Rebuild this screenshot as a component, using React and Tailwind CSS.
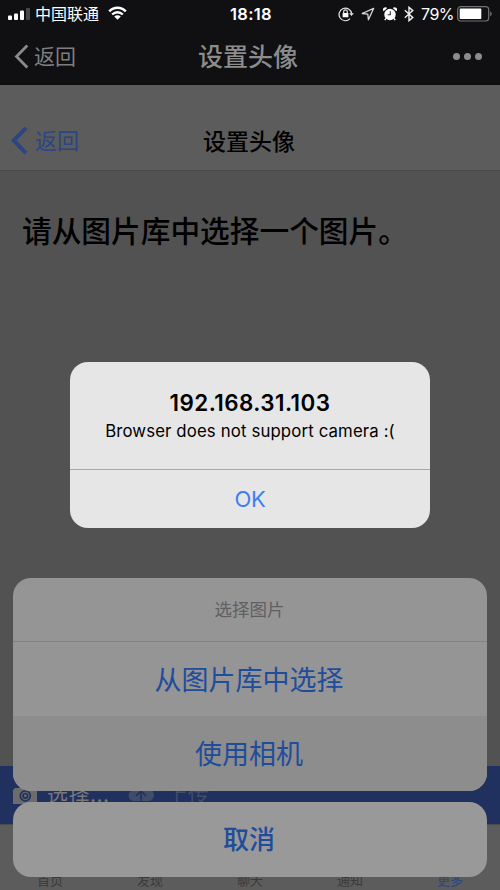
import React from "react";

const TABS = ["首页", "发现", "聊天", "通知", "更多"];

const SignalIcon = () => (
  <svg width="23" height="13" viewBox="0 0 23 13">
    <rect x="0" y="7.5" width="4" height="4.5" rx="1" fill="#fff" />
    <rect x="6" y="5.5" width="4" height="6.5" rx="1" fill="#fff" />
    <rect x="12" y="2.5" width="4" height="9.5" rx="1" fill="#fff" />
    <rect x="18" y="0" width="4" height="12" rx="1" fill="#48484a" />
  </svg>
);

const WifiIcon = () => (
  <svg width="19" height="14" viewBox="0 0 20 14" fill="none" stroke="#fff">
    <path d="M1.3 5.2C6.3 0.1 13.7 0.1 18.7 5.2" strokeWidth="2.6" />
    <path d="M4.4 8.6C7.6 5.4 12.4 5.4 15.6 8.6" strokeWidth="2.4" />
    <path d="M10 14L6.6 10.7C8.5 9 11.5 9 13.4 10.7Z" fill="#fff" stroke="none" />
  </svg>
);

const LockIcon = () => (
  <svg width="16" height="16" viewBox="0 0 16 16" fill="none" stroke="#e8e8e8" strokeWidth="1.2">
    <path d="M12 12.7A6.3 6.3 0 1 1 13.6 7.6" />
    <path d="M11.2 7.2H15.8L13.5 10Z" fill="#e8e8e8" stroke="none" />
    <rect x="4.6" y="7" width="5.8" height="4.3" rx="0.5" fill="#fff" stroke="none" />
    <path d="M5.7 7.3V5.6A1.8 1.8 0 0 1 9.3 5.6V7.3" />
  </svg>
);

const LocationIcon = () => (
  <svg width="14" height="14" viewBox="0 0 14 14" fill="none" stroke="#d8d8d8" strokeWidth="1.3" strokeLinejoin="round">
    <path d="M12.6 1.4L1.2 6.5L6.8 7.2L7.4 12.8Z" />
  </svg>
);

const AlarmIcon = () => (
  <svg width="14" height="14" viewBox="0 0 14 14">
    <circle cx="7" cy="7.5" r="5.7" fill="#fff" />
    <path d="M0.6 4.2A2.3 2.3 0 0 1 4.2 1.1ZM13.4 4.2A2.3 2.3 0 0 0 9.8 1.1Z" fill="#fff" />
    <path d="M3 11.4L1.8 13.2M11 11.4L12.2 13.2" stroke="#fff" strokeWidth="1.4" />
    <path d="M7.3 4.2V7.8H4.6" stroke="#303032" strokeWidth="1.1" fill="none" />
  </svg>
);

const BluetoothIcon = () => (
  <svg width="10" height="16" viewBox="0 0 10 16" fill="none" stroke="#f0f0f0" strokeWidth="1.4">
    <path d="M0.8 4.3L8.8 11.4L5 14.7V1.3L8.8 4.6L0.8 11.7" />
  </svg>
);

const BatteryIcon = () => (
  <svg width="36" height="16" viewBox="0 0 36 16">
    <rect x="0.7" y="0.7" width="31" height="14.3" rx="3" fill="none" stroke="#737375" strokeWidth="1.2" />
    <rect x="2.7" y="2.6" width="21.6" height="10.5" rx="0.8" fill="#fff" />
    <path d="M33.2 5.5C35.2 6.2 35.2 9.5 33.2 10.2Z" fill="#737375" />
  </svg>
);

const StatusBar = () => (
  <div className="flex h-7 items-center pl-2 text-white">
    <SignalIcon />
    <span className="ml-1 w-[66px] text-[16px] leading-7">中国联通</span>
    <span className="ml-[7px] -mt-0.5">
      <WifiIcon />
    </span>
    <span className="ml-[103px] w-[46px] text-[16.5px] font-semibold leading-7 tracking-[0.3px]">18:18</span>
    <div className="ml-auto flex items-center pr-[7px]">
      <LockIcon />
      <span className="ml-[7px]"><LocationIcon /></span>
      <span className="ml-[8px]"><AlarmIcon /></span>
      <span className="ml-[7px]"><BluetoothIcon /></span>
      <span className="ml-[7px] w-[33px] text-[16px] leading-7 tracking-[-0.5px]">79%</span>
      <span className="ml-[3px]"><BatteryIcon /></span>
    </div>
  </div>
);

const WebViewNav = () => (
  <div className="grid h-[57px] grid-cols-3 items-center pl-[14px] pr-[18px] text-[#7e7e7f]">
    <div className="flex items-center">
      <svg width="15" height="25" viewBox="0 0 15 25" fill="none" stroke="#8a8a8b" strokeWidth="2.8">
        <path d="M13.3 1.5L2.5 12.5L13.3 23.5" />
      </svg>
      <span className="ml-[5px] text-[21px] leading-8">返回</span>
    </div>
    <h1 className="whitespace-nowrap pt-px text-center text-[25px] font-medium leading-8 text-[#8c8c8c]">设置头像</h1>
    <div className="flex justify-end gap-1">
      <i className="size-[7px] rounded-full bg-[#8c8c8c]" />
      <i className="size-[7px] rounded-full bg-[#8c8c8c]" />
      <i className="size-[7px] rounded-full bg-[#8c8c8c]" />
    </div>
  </div>
);

const PageHeader = () => (
  <div className="grid h-[86px] grid-cols-3 items-center border-b border-[#4a4a4a] bg-[#5c5c5c] pl-[10px] pr-[12px] pt-[26px]">
    <div className="flex items-center text-[#2a4684]">
      <svg width="18" height="29" viewBox="0 0 18 29" fill="none" stroke="currentColor" strokeWidth="4">
        <path d="M16 1.9L3.7 14.5L16 27.1" />
      </svg>
      <span className="ml-[7px] text-[22px] leading-8">返回</span>
    </div>
    <h2 className="pt-0.5 text-center text-[23px] font-medium leading-8 text-black">设置头像</h2>
  </div>
);

const UploadBar = () => (
  <div className="flex h-[58px] items-center bg-[#20315f] pl-[13px] text-[21px] text-[#777777]">
    <svg width="25" height="20" viewBox="0 0 25 20">
      <path d="M2 3H6L8 0H16L18 3H24V19H0V5Z" fill="#6c6c6c" />
      <circle cx="12.3" cy="10.8" r="5" fill="#6c6c6c" stroke="#20315f" strokeWidth="1.7" />
      <circle cx="12.3" cy="10.8" r="2.3" fill="none" stroke="#20315f" strokeWidth="1.7" />
    </svg>
    <span className="ml-[9px] w-[70px] whitespace-nowrap tracking-[0.5px]">选择...</span>
    <svg className="ml-[9px]" width="30" height="22" viewBox="0 0 28 22">
      <path d="M6 17A5.5 5.5 0 0 1 5 6.5A8 8 0 0 1 20 5A6 6 0 0 1 22 17Z" fill="#414c6b" />
      <path d="M14 17V7M9 12L14 7L19 12" stroke="#20315f" strokeWidth="1.6" fill="none" />
    </svg>
    <span className="ml-[11px] text-[#414c6b]">上传</span>
  </div>
);

const ActionSheet = () => (
  <div className="absolute bottom-[13px] left-[13px] w-[474px] text-center text-[#204c9c]">
    <div className="h-[213px] overflow-hidden rounded-[18px] bg-[#959595]">
      <p className="h-[64px] border-b border-[#828282] pr-px text-[17.5px] leading-[63px] text-[#606060]">选择图片</p>
      <p className="h-[74px] pr-[2px] text-[27px] leading-[77px]">从图片库中选择</p>
      <p className="h-[75px] bg-[#8d8d8d] pr-[2px] text-[27px] leading-[77px]">使用相机</p>
    </div>
    <div className="mt-[11px] h-[75px] rounded-[18px] bg-[#999999] pr-[2px] text-[26px] font-medium leading-[76px]">取消</div>
  </div>
);

const AlertDialog = () => (
  <div className="absolute left-[70px] top-[362px] h-[166px] w-[360px] overflow-hidden rounded-[18px] bg-[#e6e6e6] text-center text-black">
    <div className="h-[108px] border-b border-[#a9a9ab] pt-[27px]">
      <h3 className="text-[22.4px] font-semibold leading-7 tracking-[0.45px]">192.168.31.103</h3>
      <p className="mt-[2px] whitespace-nowrap text-[16.8px] leading-6 tracking-[0.13px]">Browser does not support camera :(</p>
    </div>
    <button className="h-[58px] w-full text-[22px] leading-[58px] tracking-[-0.4px] text-[#3d7ef5]">OK</button>
  </div>
);

const App = () => {
  return (
    <div className="relative flex h-[890px] w-[500px] flex-col overflow-hidden bg-[#525252] font-['Inter','Noto_Sans_CJK_SC',sans-serif]">
      <div className="bg-[#101012]">
        <StatusBar />
        <WebViewNav />
      </div>
      <PageHeader />
      <main className="flex-1 px-[22px] pt-[37px]">
        <p className="whitespace-nowrap text-[29.7px] font-medium leading-[46px] text-black">请从图片库中选择一个图片。</p>
      </main>
      <UploadBar />
      <div className="grid h-[66px] grid-cols-5 items-end border-t border-[#4b4b4b] bg-[#5c5c5c] text-center text-[13px] leading-5 text-[#3a3a3a]">
        {TABS.map((tab) => (
          <span key={tab} className={tab === "更多" ? "text-[#2a4684]" : ""}>
            {tab}
          </span>
        ))}
      </div>

      <ActionSheet />
      <AlertDialog />
    </div>
  );
};

export default App;
